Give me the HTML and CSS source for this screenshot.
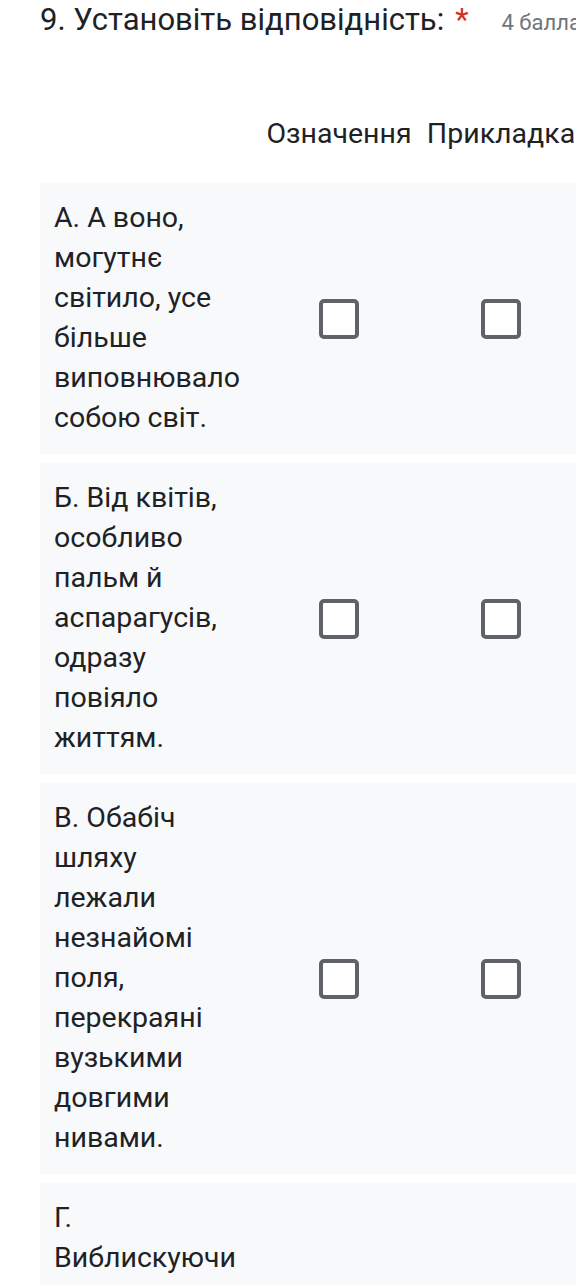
FILE: index.html
```html
<!DOCTYPE html>
<html lang="uk">
<head>
<meta charset="utf-8">
<title>Установіть відповідність</title>
<link rel="stylesheet" href="styles.css">
</head>
<body>
<div class="page">
  <div class="q-title">
    <span class="q-text">9. Установіть відповідність:</span>
    <span class="req">*</span>
    <span class="points">4 балла</span>
  </div>

  <div class="grid">
    <div class="grid-row grid-head">
      <div class="label"></div>
      <div class="col-head">Означення</div>
      <div class="col-head">Прикладка</div>
    </div>

    <div class="grid-row item">
      <div class="label">А. А воно, могутнє світило, усе більше виповнювало собою світ.</div>
      <div class="cell"><span class="box"></span></div>
      <div class="cell"><span class="box"></span></div>
    </div>

    <div class="grid-row item">
      <div class="label">Б. Від квітів, особливо пальм й аспарагусів, одразу повіяло життям.</div>
      <div class="cell"><span class="box"></span></div>
      <div class="cell"><span class="box"></span></div>
    </div>

    <div class="grid-row item">
      <div class="label">В. Обабіч шляху лежали незнайомі поля, перекраяні вузькими довгими нивами.</div>
      <div class="cell"><span class="box"></span></div>
      <div class="cell"><span class="box"></span></div>
    </div>

    <div class="grid-row item">
      <div class="label">Г. Виблискуючи на сонці, море грало безліччю барв.</div>
      <div class="cell"><span class="box"></span></div>
      <div class="cell"><span class="box"></span></div>
    </div>
  </div>
</div>
</body>
</html>
```

FILE: styles.css
```css
html, body {
  margin: 0;
  padding: 0;
  background: #ffffff;
}

body {
  font-family: Roboto, "Noto Sans", Arial, sans-serif;
  color: #202124;
  overflow: hidden;
  width: 576px;
  height: 1285px;
}

.page {
  padding-left: 40px;
}

.q-title {
  display: flex;
  align-items: baseline;
  white-space: nowrap;
  padding-top: 2px;
  font-size: 31px;
  line-height: 36px;
}

.req {
  color: #d93025;
  margin-left: 11px;
}

.points {
  margin-left: 33px;
  font-size: 22px;
  color: #70757a;
}

.grid {
  display: flex;
  flex-direction: column;
  gap: 9px;
  width: 560px;
}

.grid-row {
  display: grid;
  grid-template-columns: 218px 162px 162px;
}

.grid-head {
  margin-top: 73px;
  margin-bottom: 20px;
  font-size: 28.5px;
  line-height: 40px;
}

.col-head {
  display: flex;
  justify-content: center;
  white-space: nowrap;
}

.item {
  background: #f8f9fa;
}

.label {
  font-size: 28.5px;
  line-height: 40px;
  padding: 15px 16px 16px 14px;
}

.cell {
  display: flex;
  align-items: center;
  justify-content: center;
}

.box {
  display: block;
  width: 32px;
  height: 32px;
  border: 4px solid #5f6368;
  border-radius: 5px;
  background: #ffffff;
}
```
